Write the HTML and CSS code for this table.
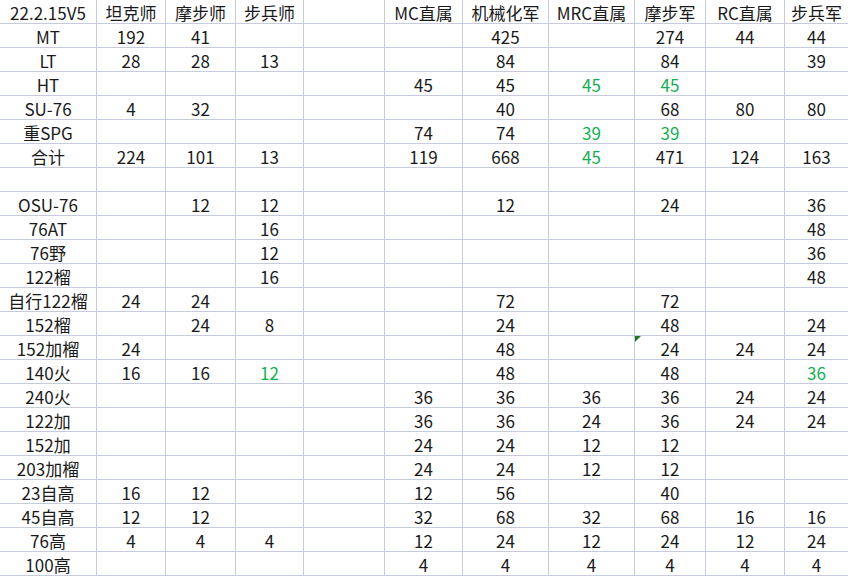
FILE: index.html
```html
<!DOCTYPE html>
<html lang="zh">
<head>
<meta charset="utf-8">
<link rel="stylesheet" href="styles.css">
</head>
<body>
<div class="sheet">
  <div class="c">22.2.15V5</div><div class="c">坦克师</div><div class="c">摩步师</div><div class="c">步兵师</div><div class="c"></div><div class="c">MC直属</div><div class="c">机械化军</div><div class="c">MRC直属</div><div class="c">摩步军</div><div class="c">RC直属</div><div class="c">步兵军</div>

  <div class="c">MT</div><div class="c">192</div><div class="c">41</div><div class="c"></div><div class="c"></div><div class="c"></div><div class="c">425</div><div class="c"></div><div class="c">274</div><div class="c">44</div><div class="c">44</div>

  <div class="c">LT</div><div class="c">28</div><div class="c">28</div><div class="c">13</div><div class="c"></div><div class="c"></div><div class="c">84</div><div class="c"></div><div class="c">84</div><div class="c"></div><div class="c">39</div>

  <div class="c">HT</div><div class="c"></div><div class="c"></div><div class="c"></div><div class="c"></div><div class="c">45</div><div class="c">45</div><div class="c g">45</div><div class="c g">45</div><div class="c"></div><div class="c"></div>

  <div class="c">SU-76</div><div class="c">4</div><div class="c">32</div><div class="c"></div><div class="c"></div><div class="c"></div><div class="c">40</div><div class="c"></div><div class="c">68</div><div class="c">80</div><div class="c">80</div>

  <div class="c">重SPG</div><div class="c"></div><div class="c"></div><div class="c"></div><div class="c"></div><div class="c">74</div><div class="c">74</div><div class="c g">39</div><div class="c g">39</div><div class="c"></div><div class="c"></div>

  <div class="c">合计</div><div class="c">224</div><div class="c">101</div><div class="c">13</div><div class="c"></div><div class="c">119</div><div class="c">668</div><div class="c g">45</div><div class="c">471</div><div class="c">124</div><div class="c">163</div>

  <div class="c"></div><div class="c"></div><div class="c"></div><div class="c"></div><div class="c"></div><div class="c"></div><div class="c"></div><div class="c"></div><div class="c"></div><div class="c"></div><div class="c"></div>

  <div class="c">OSU-76</div><div class="c"></div><div class="c">12</div><div class="c">12</div><div class="c"></div><div class="c"></div><div class="c">12</div><div class="c"></div><div class="c">24</div><div class="c"></div><div class="c">36</div>

  <div class="c">76AT</div><div class="c"></div><div class="c"></div><div class="c">16</div><div class="c"></div><div class="c"></div><div class="c"></div><div class="c"></div><div class="c"></div><div class="c"></div><div class="c">48</div>

  <div class="c">76野</div><div class="c"></div><div class="c"></div><div class="c">12</div><div class="c"></div><div class="c"></div><div class="c"></div><div class="c"></div><div class="c"></div><div class="c"></div><div class="c">36</div>

  <div class="c">122榴</div><div class="c"></div><div class="c"></div><div class="c">16</div><div class="c"></div><div class="c"></div><div class="c"></div><div class="c"></div><div class="c"></div><div class="c"></div><div class="c">48</div>

  <div class="c">自行122榴</div><div class="c">24</div><div class="c">24</div><div class="c"></div><div class="c"></div><div class="c"></div><div class="c">72</div><div class="c"></div><div class="c">72</div><div class="c"></div><div class="c"></div>

  <div class="c">152榴</div><div class="c"></div><div class="c">24</div><div class="c">8</div><div class="c"></div><div class="c"></div><div class="c">24</div><div class="c"></div><div class="c">48</div><div class="c"></div><div class="c">24</div>

  <div class="c">152加榴</div><div class="c">24</div><div class="c"></div><div class="c"></div><div class="c"></div><div class="c"></div><div class="c">48</div><div class="c"></div><div class="c flag">24</div><div class="c">24</div><div class="c">24</div>

  <div class="c">140火</div><div class="c">16</div><div class="c">16</div><div class="c g">12</div><div class="c"></div><div class="c"></div><div class="c">48</div><div class="c"></div><div class="c">48</div><div class="c"></div><div class="c g">36</div>

  <div class="c">240火</div><div class="c"></div><div class="c"></div><div class="c"></div><div class="c"></div><div class="c">36</div><div class="c">36</div><div class="c">36</div><div class="c">36</div><div class="c">24</div><div class="c">24</div>

  <div class="c">122加</div><div class="c"></div><div class="c"></div><div class="c"></div><div class="c"></div><div class="c">36</div><div class="c">36</div><div class="c">24</div><div class="c">36</div><div class="c">24</div><div class="c">24</div>

  <div class="c">152加</div><div class="c"></div><div class="c"></div><div class="c"></div><div class="c"></div><div class="c">24</div><div class="c">24</div><div class="c">12</div><div class="c">12</div><div class="c"></div><div class="c"></div>

  <div class="c">203加榴</div><div class="c"></div><div class="c"></div><div class="c"></div><div class="c"></div><div class="c">24</div><div class="c">24</div><div class="c">12</div><div class="c">12</div><div class="c"></div><div class="c"></div>

  <div class="c">23自高</div><div class="c">16</div><div class="c">12</div><div class="c"></div><div class="c"></div><div class="c">12</div><div class="c">56</div><div class="c"></div><div class="c">40</div><div class="c"></div><div class="c"></div>

  <div class="c">45自高</div><div class="c">12</div><div class="c">12</div><div class="c"></div><div class="c"></div><div class="c">32</div><div class="c">68</div><div class="c">32</div><div class="c">68</div><div class="c">16</div><div class="c">16</div>

  <div class="c">76高</div><div class="c">4</div><div class="c">4</div><div class="c">4</div><div class="c"></div><div class="c">12</div><div class="c">24</div><div class="c">12</div><div class="c">24</div><div class="c">12</div><div class="c">24</div>

  <div class="c">100高</div><div class="c"></div><div class="c"></div><div class="c"></div><div class="c"></div><div class="c">4</div><div class="c">4</div><div class="c">4</div><div class="c">4</div><div class="c">4</div><div class="c">4</div>
</div>
</body>
</html>
```

FILE: styles.css
```css
html, body {
  margin: 0;
  padding: 0;
  background: #ffffff;
}

body {
  width: 848px;
  height: 577px;
  overflow: hidden;
}

.sheet {
  display: grid;
  grid-template-columns: 97px 69px 70px 68px 81px 78px 86px 86px 71px 79px 63px;
  grid-auto-rows: 24px;
  width: 848px;
  font-family: "Noto Sans CJK SC", "Noto Sans", sans-serif;
  font-size: 17px;
  color: #1a1a1a;
}

.c {
  box-sizing: border-box;
  border-right: 1px solid #c6cbdd;
  border-bottom: 1px solid #c6cbdd;
  text-align: center;
  white-space: nowrap;
  line-height: 20px;
  padding-top: 3px;
  position: relative;
}

.c:nth-child(11n) {
  border-right: none;
}

.g {
  color: #13b050;
}

.flag::before {
  content: "";
  position: absolute;
  left: 0;
  top: 0;
  width: 0;
  height: 0;
  border-top: 6px solid #1f7a1f;
  border-right: 6px solid transparent;
}
```
